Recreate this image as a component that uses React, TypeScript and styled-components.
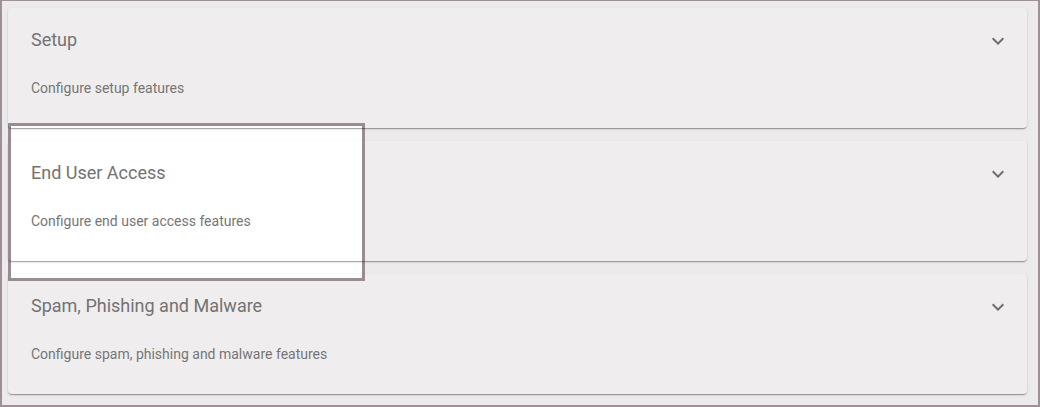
import React from "react";
import styled, { createGlobalStyle } from "styled-components";

const Global = createGlobalStyle`
  html, body { margin: 0; padding: 0; background: #edeaeb; }
  body { font-family: Roboto, "Noto Sans", "Liberation Sans", sans-serif; }
  * { box-sizing: border-box; }
`;

const Frame = styled.div`
  width: 1040px;
  height: 407px;
  border-style: solid;
  border-color: #9d9097;
  border-width: 1px 2px 2px 2px;
  background: #edeaeb;
  padding: 7px 11px 0 6px;
  display: flex;
  flex-direction: column;
  gap: 13px;
  overflow: hidden;
`;

const Card = styled.section`
  position: relative;
  height: 120px;
  background: #efedee;
  border-radius: 4px;
  padding: 0 17px 0 23px;
  display: flex;
  flex-direction: column;

  &::after {
    content: "";
    position: absolute;
    inset: 0;
    z-index: 2;
    border-radius: 4px;
    pointer-events: none;
    box-shadow: 0 2px 1px -1px rgba(0, 0, 0, 0.2), 0 1px 1px 0 rgba(0, 0, 0, 0.14),
      0 1px 3px 0 rgba(0, 0, 0, 0.12);
  }
`;

const Header = styled.div`
  position: relative;
  z-index: 3;
  height: 64px;
  display: flex;
  align-items: center;
  justify-content: space-between;
`;

const Title = styled.h2`
  margin: -2px 0 0;
  font-size: 18px;
  font-weight: 400;
  color: #737373;
`;

const Description = styled.p`
  position: relative;
  z-index: 3;
  margin: 6px 0 0;
  font-size: 14px;
  line-height: 20px;
  color: #767676;
`;

const Chevron = styled.svg`
  width: 24px;
  height: 24px;
  fill: #6e6e6e;
  margin-top: 2px;
`;

const Highlight = styled.div`
  position: absolute;
  z-index: 1;
  top: -18px;
  left: 0;
  width: 357px;
  height: 158px;
  border: 3px solid #998c93;
  background: #ffffff;
  pointer-events: none;
`;

const sections = [
  { title: "Setup", desc: "Configure setup features", highlighted: false },
  { title: "End User Access", desc: "Configure end user access features", highlighted: true },
  { title: "Spam, Phishing and Malware", desc: "Configure spam, phishing and malware features", highlighted: false },
];

export default function App() {
  return (
    <>
      <Global />
      <Frame>
        {sections.map((s) => (
          <Card key={s.title}>
            {s.highlighted && <Highlight />}
            <Header>
              <Title>{s.title}</Title>
              <Chevron viewBox="0 0 24 24">
                <path d="M16.59 8.59 12 13.17 7.41 8.59 6 10l6 6 6-6z" />
              </Chevron>
            </Header>
            <Description>{s.desc}</Description>
          </Card>
        ))}
      </Frame>
    </>
  );
}
